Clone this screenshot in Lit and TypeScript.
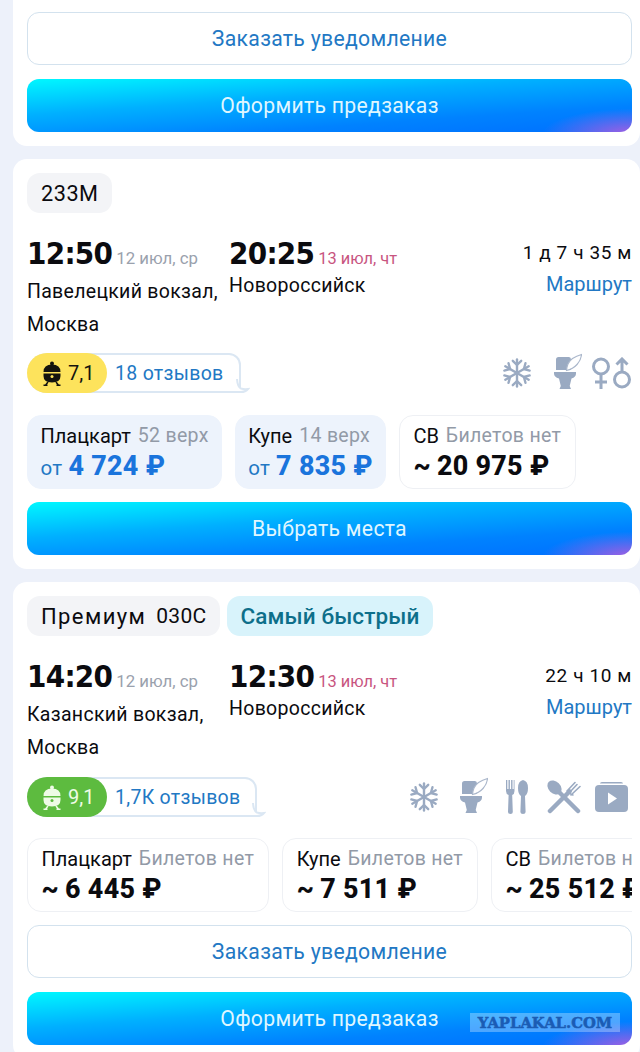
import { LitElement, html, css, svg } from "lit";
import { customElement } from "lit/decorators.js";

const snow = html`<svg class="ic" width="30" height="30" viewBox="0 0 30 30" fill="none" stroke="#9aaac2" stroke-width="2.400" stroke-linecap="round" stroke-linejoin="round">
  ${[0, 60, 120].map((a) => svg`<g transform="rotate(${a} 15 15)"><path d="M15 1.500v27"/><path d="M10.800 2.800 15 7l4.200-4.200"/><path d="M10.800 27.200 15 23l4.200 4.200"/></g>`)}
</svg>`;

const toilet = html`<svg class="ic" width="28" height="40" viewBox="0 0 28 40">
  <path d="M2 6.500Q2 4 4.500 4h10.500q2 0 2 2.500V17H2Z" fill="#9aaac2"/>
  <path d="M12.500 17.500Q13 9.500 18.500 5.500q4-2.500 9-4Q27 7 23 11.500q-4 4.500-10.500 6Z" fill="#fff" stroke="#aab7cb" stroke-width="1.200"/>
  <path d="M0 19h22v1.500q0 3.500-4.500 5l-1.800 7.500 1.300 3H5.500l1.300-3L5 25.500Q0 24 0 20.500Z" fill="#9aaac2"/>
</svg>`;

const gender = html`<svg class="ic" width="40" height="32" viewBox="0 0 40 32" fill="none" stroke="#9aaac2" stroke-width="3">
  <circle cx="9" cy="9.500" r="7.500"/><path d="M9 17v15M3 25h12"/>
  <circle cx="30" cy="22.500" r="7.500"/><path d="M30 15V2M24.500 7.500 30 2l5.500 5.500"/>
</svg>`;

const cutlery = html`<svg class="ic" width="22" height="34" viewBox="0 0 22 34" fill="#9aaac2">
  <path d="M0 0h1.300v9h1.200V0h1.400v9h1.200V0h1.400v9h1.200V0H8.500v11q0 3-2.300 4l.6 17q0 2-2.300 2T2 32l.6-17Q0 14 0 11Z"/>
  <path d="M17 0q5 1 5 8 0 6-3 8l.6 16q0 2-2.600 2t-2.600-2l.6-16q-3-2-3-8 0-7 5-8Z"/>
</svg>`;

const crossed = html`<svg class="ic" width="34" height="34" viewBox="0 0 34 34" fill="none" stroke="#9aaac2" stroke-linecap="round">
  <path d="M12 12 31 31" stroke-width="4.500"/>
  <ellipse cx="7.500" cy="7.500" rx="6" ry="8" transform="rotate(-45 7.500 7.500)" fill="#9aaac2" stroke="none"/>
  <path d="M3 31 22.500 11.500" stroke-width="4.500"/>
  <path d="M20 11 28 2.500M22 13 30 4.500M24 15 33 6.500M20.500 10.500Q24 15 26 15" stroke-width="1.600"/>
</svg>`;

const video = html`<svg class="ic" width="33" height="30" viewBox="0 0 33 30">
  <path d="M5 1.500Q5 0 7 0h19q2 0 2 1.500Z" fill="#9aaac2"/>
  <rect x="0" y="3" width="33" height="27" rx="4" fill="#9aaac2"/>
  <path d="M13 10.500 22 16.500 13 22.500Z" fill="#fff"/>
</svg>`;

const train = (c: string, bg: string) => html`<svg class="train" width="20" height="25" viewBox="0 0 20 25">
  <circle cx="10" cy="2.500" r="2" fill="${c}"/>
  <path d="M1.500 11Q1.500 3.500 10 3.500T18.500 11Z" fill="${c}"/>
  <path d="M1.500 12.500h17V15q0 6.500-8.500 6.500T1.500 15Z" fill="${c}"/>
  <circle cx="10" cy="15.500" r="1.500" fill="${bg}"/>
  <path d="M6 21 3.500 24.200M14 21l2.500 3.200M1.500 24.200h4M14.500 24.200h4" stroke="${c}" stroke-width="1.500" fill="none"/>
</svg>`;

const tail = html`<svg class="tail" width="14" height="14" viewBox="0 0 14 14" fill="#fff" stroke="#dbe7f3" stroke-width="2">
  <path d="M1 0Q1.500 8 5 9.500q3 1 7 .5-2.500 3-7 3H0"/>
</svg>`;

interface Fare { name: string; note: string; price: string; on?: boolean }

@customElement("app-root")
export class AppRoot extends LitElement {
  static styles = css`
    :host { display: block; position: relative; width: 640px; height: 1052px; overflow: hidden; background: #edf1fa; font-family: Roboto, "Noto Sans", sans-serif; color: #0b0b0f; }
    .card { margin: 0 0 13px 13px; padding: 14px 8px 14px 14px; background: #fff; border-radius: 14px; }
    .card.first { padding-top: 12px; border-radius: 0 0 14px 14px; }
    .btn { display: flex; align-items: center; justify-content: center; box-sizing: border-box; height: 53px; padding-bottom: 1px; border-radius: 12px; font-size: 21.200px; letter-spacing: 0.300px; }
    .btn.out { border: 1.500px solid #d3e2ee; color: #2278c4; background: #fff; }
    .btn.out.later { margin-top: 13px; }
    .btn.grad { margin-top: 14px; color: #dff6ff; background: radial-gradient(90px 26px at 100% 105%, rgba(170, 95, 225, 1), rgba(170, 95, 225, 0) 100%), linear-gradient(176deg, #00f8ff 0%, #00b0ff 38%, #0082ff 72%, #0070ff 100%); }
    .btn.grad.solo { margin-top: 13px; }
    .chips { display: flex; gap: 7px; }
    .chip { display: flex; align-items: center; height: 40px; padding: 0 13px 0 14px; border-radius: 13px; background: #f3f4f7; font-size: 21.700px; letter-spacing: 0.500px; }
    .chip .name { font-size: 22px; letter-spacing: 1.400px; }
    .chip .num { margin-left: 10px; letter-spacing: 0.300px; font-size: 21px; }
    .chip.fast { background: #d8f3fb; color: #0d6f8a; font-size: 22.500px; font-weight: 500; padding: 0 14px; letter-spacing: 0.100px; }
    .times { display: grid; grid-template-columns: 202px 1fr auto; margin-top: 22px; }
    .time { display: flex; align-items: baseline; height: 36px; line-height: 36px; gap: 4px; }
    .time b { font-size: 31px; font-weight: 700; font-family: "DejaVu Sans Condensed", Roboto, sans-serif; letter-spacing: -0.700px; }
    .time span { font-size: 16.800px; color: #9aa1ad; }
    .time span.next { color: #c8557f; font-size: 16.400px; }
    .place { font-size: 19.500px; line-height: 33px; letter-spacing: 0.300px; height: 66px; }
    .place.narrow { width: 198px; margin-top: 4px; }
    .place.arr { margin-top: -2px; }
    .dur { text-align: right; }
    .dur div { height: 36px; line-height: 36px; font-size: 19px; letter-spacing: 0.600px; }
    .dur a { display: block; font-size: 20px; line-height: 33px; color: #2278c4; margin-top: -3px; }
    .mid { display: flex; justify-content: space-between; align-items: center; margin-top: 12px; height: 40px; }
    .mid.b { margin-top: 13px; }
    .rate { position: relative; display: flex; align-items: center; box-sizing: border-box; height: 40px; border: 2px solid #dbe7f3; border-left: none; border-radius: 20px 12px 3px 20px; font-size: 19.500px; color: #2278c4; letter-spacing: 0.300px; padding-right: 15px; }
    .tail { position: absolute; right: -11px; bottom: -2px; }
    .score { display: flex; align-items: center; gap: 6px; box-sizing: border-box; width: 80px; height: 40px; margin: -2px 8px -2px 0; padding-left: 15px; border-radius: 20px; background: #fde35c; color: #14140e; font-size: 20px; letter-spacing: 0; }
    .score.good { background: #5dbb3f; color: #eefbe6; }
    .train { flex: none; }
    .icons { display: flex; align-items: center; }
    .ic { display: block; flex: none; }
    .icons.a .ic:nth-child(2) { margin-left: 22px; }
    .icons.a .ic:nth-child(3) { margin-left: 10px; }
    .icons.b { padding-right: 4px; }
    .icons.b .ic:nth-child(2) { margin-left: 21px; }
    .icons.b .ic:nth-child(3) { margin-left: 18px; }
    .icons.b .ic:nth-child(4) { margin-left: 19px; }
    .icons.b .ic:nth-child(5) { margin-left: 14px; }
    .fares { display: flex; gap: 12.500px; margin-top: 22px; overflow: hidden; }
    .fares.b { gap: 13.500px; margin-top: 21px; }
    .fare { flex: none; box-sizing: border-box; height: 74px; padding: 7.500px 13.500px 0; border-radius: 14px; border: 1.500px solid #eef0f4; background: #fff; }
    .fare.on { padding: 7.500px 12.500px 0; border-color: #edf3fc; background: #edf3fc; }
    .l1 { display: flex; gap: 7px; font-size: 20px; line-height: 24px; white-space: nowrap; }
    .l1 span { color: #929aa7; letter-spacing: 0.300px; font-size: 19.500px; }
    .l2 { display: flex; align-items: baseline; gap: 6px; margin-top: 3px; font-size: 26.900px; line-height: 30px; font-weight: 800; white-space: nowrap; letter-spacing: 0.300px; }
    .l2 small { font-size: 20.500px; font-weight: 400; color: #2278c4; }
    .fare.on .l2 b { color: #1a74dc; }
    .l2 b { font-weight: 800; }
    .wm { position: absolute; left: 470px; top: 1013px; width: 150px; height: 19px; display: flex; align-items: center; justify-content: center; background: rgba(255, 255, 255, 0.3); color: #1b5cb4; font-family: "DejaVu Serif", serif; font-weight: 700; font-size: 14.800px; -webkit-text-stroke: 0.500px #1b5cb4; white-space: nowrap; }
  `;

  private fares(list: Fare[], cls = "") {
    return html`<div class="fares ${cls}">
      ${list.map(
        (f) => html`<div class="fare ${f.on ? "on" : ""}">
          <div class="l1">${f.name}<span>${f.note}</span></div>
          <div class="l2">${f.on ? html`<small>от</small>` : html`<b>~</b>`}<b>${f.price} ₽</b></div>
        </div>`
      )}
    </div>`;
  }

  render() {
    return html`
      <div class="card first">
        <div class="btn out">Заказать уведомление</div>
        <div class="btn grad">Оформить предзаказ</div>
      </div>

      <div class="card">
        <div class="chips"><div class="chip">233М</div></div>
        <div class="times">
          <div>
            <div class="time"><b>12:50</b><span>12 июл, ср</span></div>
            <div class="place narrow">Павелецкий вокзал, Москва</div>
          </div>
          <div>
            <div class="time"><b>20:25</b><span class="next">13 июл, чт</span></div>
            <div class="place arr">Новороссийск</div>
          </div>
          <div class="dur"><div>1 д 7 ч 35 м</div><a>Маршрут</a></div>
        </div>
        <div class="mid">
          <div class="rate"><div class="score">${train("#14140e", "#fde35c")}7,1</div>18 отзывов${tail}</div>
          <div class="icons a">${snow}${toilet}${gender}</div>
        </div>
        ${this.fares([
          { name: "Плацкарт", note: "52 верх", price: "4 724", on: true },
          { name: "Купе", note: "14 верх", price: "7 835", on: true },
          { name: "СВ", note: "Билетов нет", price: "20 975" },
        ])}
        <div class="btn grad solo">Выбрать места</div>
      </div>

      <div class="card">
        <div class="chips">
          <div class="chip"><span class="name">Премиум</span><span class="num">030С</span></div>
          <div class="chip fast">Самый быстрый</div>
        </div>
        <div class="times">
          <div>
            <div class="time"><b>14:20</b><span>12 июл, ср</span></div>
            <div class="place narrow">Казанский вокзал, Москва</div>
          </div>
          <div>
            <div class="time"><b>12:30</b><span class="next">13 июл, чт</span></div>
            <div class="place arr">Новороссийск</div>
          </div>
          <div class="dur"><div>22 ч 10 м</div><a>Маршрут</a></div>
        </div>
        <div class="mid b">
          <div class="rate"><div class="score good">${train("#eefbe6", "#5dbb3f")}9,1</div>1,7К отзывов${tail}</div>
          <div class="icons b">${snow}${toilet}${cutlery}${crossed}${video}</div>
        </div>
        ${this.fares(
          [
            { name: "Плацкарт", note: "Билетов нет", price: "6 445" },
            { name: "Купе", note: "Билетов нет", price: "7 511" },
            { name: "СВ", note: "Билетов нет", price: "25 512" },
          ],
          "b"
        )}
        <div class="btn out later">Заказать уведомление</div>
        <div class="btn grad">Оформить предзаказ</div>
      </div>

      <div class="wm">YAPLAKAL.COM</div>
    `;
  }
}
